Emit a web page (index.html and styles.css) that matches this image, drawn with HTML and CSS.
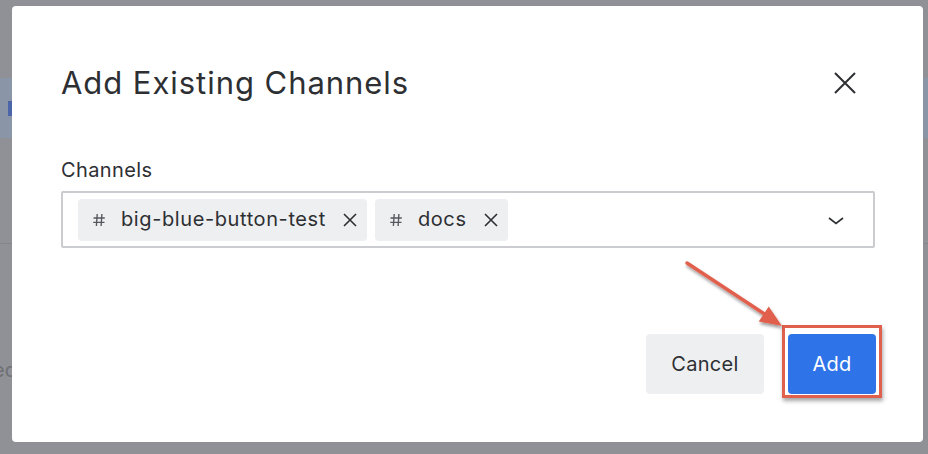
FILE: index.html
```html
<!DOCTYPE html>
<html lang="en">
<head>
<meta charset="utf-8">
<title>Add Existing Channels</title>
<link rel="stylesheet" href="styles.css">
</head>
<body>
<div class="page">
  <div class="page-top"></div>
  <div class="page-band"><span class="band-mark"></span></div>
  <div class="page-gap"></div>
  <div class="page-rule"></div>
  <div class="page-text">Archived</div>
</div>

<div class="modal" role="dialog" aria-labelledby="dlg-title">
  <div class="modal-header">
    <h1 id="dlg-title" class="modal-title">Add Existing Channels</h1>
    <button class="close-btn" aria-label="Close">
      <svg width="24" height="24" viewBox="0 0 24 24"><path d="M2 2 L22 22 M22 2 L2 22" stroke="#2d2f33" stroke-width="2" fill="none"/></svg>
    </button>
  </div>

  <label class="field-label">Channels</label>
  <div class="select">
    <div class="chips">
      <span class="chip">
        <svg class="hash" width="14" height="14" viewBox="0 0 14 14"><path d="M5.2 1 L4.4 13 M9.9 1 L9.1 13 M1.5 5 H12.8 M1.2 9.3 H12.5" stroke="#55585d" stroke-width="1.35" fill="none"/></svg>
        <span class="chip-text">big-blue-button-test</span>
        <svg class="chip-x" width="14" height="14" viewBox="0 0 14 14"><path d="M1 1 L13 13 M13 1 L1 13" stroke="#2d2f33" stroke-width="1.6" fill="none"/></svg>
      </span>
      <span class="chip">
        <svg class="hash" width="14" height="14" viewBox="0 0 14 14"><path d="M5.2 1 L4.4 13 M9.9 1 L9.1 13 M1.5 5 H12.8 M1.2 9.3 H12.5" stroke="#55585d" stroke-width="1.35" fill="none"/></svg>
        <span class="chip-text">docs</span>
        <svg class="chip-x" width="14" height="14" viewBox="0 0 14 14"><path d="M1 1 L13 13 M13 1 L1 13" stroke="#2d2f33" stroke-width="1.6" fill="none"/></svg>
      </span>
    </div>
    <svg class="chevron" width="16" height="8" viewBox="0 0 16 8"><path d="M1 1 L8 6.5 L15 1" stroke="#2d2f33" stroke-width="1.6" fill="none"/></svg>
  </div>

  <div class="modal-footer">
    <button class="btn btn-secondary">Cancel</button>
    <span class="highlight">
      <button class="btn btn-primary">Add</button>
    </span>
  </div>
</div>

<svg class="arrow" width="130" height="90" viewBox="0 0 130 90" aria-hidden="true">
  <defs>
    <filter id="sh" x="-20%" y="-20%" width="140%" height="140%">
      <feDropShadow dx="1" dy="2.5" stdDeviation="1.5" flood-color="#000" flood-opacity="0.4"/>
    </filter>
  </defs>
  <g filter="url(#sh)">
    <line x1="17" y1="13" x2="96" y2="65" stroke="#e1604d" stroke-width="3.5" stroke-linecap="round"/>
    <polygon points="112,76 88.7,71.4 98.7,56.4" fill="#e1604d"/>
  </g>
</svg>
</body>
</html>
```

FILE: styles.css
```css
* { box-sizing: border-box; }

html, body {
  margin: 0;
  padding: 0;
}

body {
  width: 928px;
  height: 454px;
  overflow: hidden;
  position: relative;
  background: #909196;
  font-family: Inter, "Noto Sans", sans-serif;
  color: #2d2f33;
}

/* dimmed page behind the dialog */
.page {
  display: flex;
  flex-direction: column;
  height: 454px;
}
.page-top { height: 78px; }
.page-band {
  height: 60px;
  background: #8b95a8;
  display: flex;
  align-items: center;
}
.band-mark {
  width: 12px;
  height: 15px;
  margin-left: 8px;
  background: #4a66a8;
}
.page-gap { height: 105px; }
.page-rule {
  height: 1px;
  background: #85868b;
}
.page-text {
  margin-top: 114px;
  padding-left: 0;
  font-size: 20px;
  color: #6f7075;
  white-space: nowrap;
  direction: rtl;
  width: 17px;
  overflow: hidden;
}

/* dialog */
.modal {
  position: absolute;
  left: 12px;
  top: 6px;
  width: 911px;
  height: 436px;
  background: #fff;
  border-radius: 4px;
  padding: 57px 48px 0 49px;
  display: flex;
  flex-direction: column;
}

.modal-header {
  display: flex;
  align-items: center;
  justify-content: space-between;
  height: 40px;
}
.modal-title {
  margin: 0;
  font-size: 31px;
  font-weight: 400;
  line-height: 40px;
  color: #2d2f33;
  letter-spacing: 0.95px;
}
.close-btn {
  border: 0;
  background: none;
  padding: 0;
  width: 24px;
  height: 24px;
  margin-right: 18px;
  display: flex;
}

.field-label {
  margin-top: 55px;
  font-size: 20px;
  line-height: 24px;
  color: #2d2f33;
  letter-spacing: 0.4px;
}

.select {
  margin-top: 9px;
  height: 57px;
  border: 2px solid #cbcccf;
  border-radius: 2px;
  display: flex;
  align-items: center;
  justify-content: space-between;
  padding: 0 29px 0 15px;
}
.chips {
  display: flex;
  gap: 8px;
}
.chip {
  display: flex;
  align-items: center;
  height: 42px;
  background: #eeeff1;
  border-radius: 4px;
  padding: 0 10px 0 14px;
}
.hash { margin-right: 15px; }
.chip-text {
  font-size: 20px;
  line-height: 24px;
  margin-top: -2px;
  color: #2d2f33;
  letter-spacing: 0.6px;
}
.chip-x { margin-left: 17px; }
.chevron { margin-top: 2px; }

.modal-footer {
  margin-top: 86px;
  margin-right: -1px;
  display: flex;
  justify-content: flex-end;
  gap: 24px;
}
.btn {
  height: 60px;
  border: 0;
  border-radius: 4px;
  padding: 0 20px;
  font-family: Inter, "Noto Sans", sans-serif;
  font-size: 20px;
  font-weight: 400;
  letter-spacing: 0.3px;
}
.btn-secondary {
  background: #eeeff1;
  color: #2d2f33;
  width: 118px;
}
.btn-primary {
  background: #2f73e9;
  color: #fff;
  width: 88px;
}

/* annotation */
.highlight {
  position: relative;
  display: flex;
}
.highlight::after {
  content: "";
  position: absolute;
  left: -6px;
  right: -6px;
  top: -9px;
  bottom: -4px;
  border: 3px solid #e1604d;
  box-shadow: 1px 3px 4px rgba(0, 0, 0, 0.35);
  pointer-events: none;
}

.arrow {
  position: absolute;
  left: 670px;
  top: 250px;
}
```
